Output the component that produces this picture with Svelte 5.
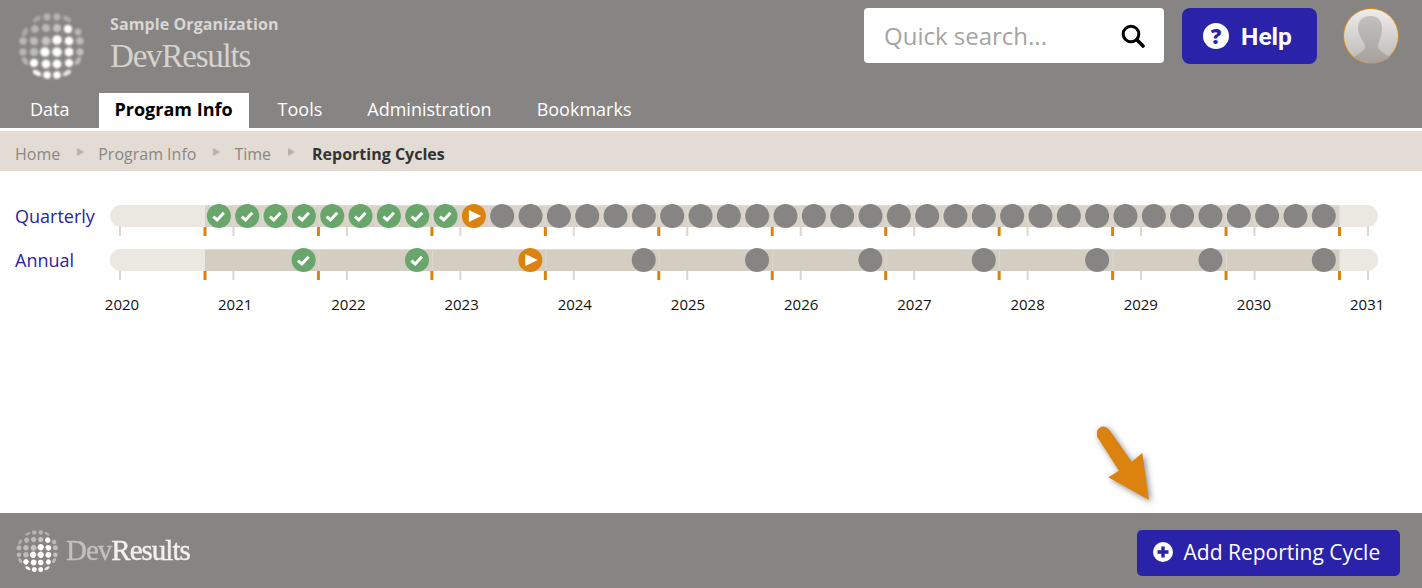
<script>
  const navItems = ['Data', 'Program Info', 'Tools', 'Administration', 'Bookmarks'];
  const crumbs = ['Home', 'Program Info', 'Time'];
  const years = Array.from({ length: 12 }, (_, i) => ({ label: 2020 + i, x: 120 + 113.45 * i, text: 122 + 113.2 * i }));
  const fiscal = Array.from({ length: 11 }, (_, i) => 205 + 113.45 * i);
  const quarters = Array.from({ length: 39 }, (_, i) => 233.4 + 28.36 * i);
  const qDots = Array.from({ length: 40 }, (_, i) => ({
    x: 218.9 + 28.33 * i,
    state: i < 9 ? 'done' : i === 9 ? 'now' : 'todo'
  }));
  const aDots = Array.from({ length: 10 }, (_, i) => ({
    x: 303.6 + 113.36 * i,
    state: i < 2 ? 'done' : i === 2 ? 'now' : 'todo'
  }));
  const rows = [
    { label: 'Quarterly', top: 34, dots: qDots, dividers: quarters, fill: '#d9d2c8' },
    { label: 'Annual', top: 78, dots: aDots, dividers: fiscal.slice(1, -1), fill: '#d4cdc1' }
  ];
  // globe dots: x, y, radius, opacity; edge dots are stretched along the rim
  const globeRows = [
    [[37,19,3.5,.3],[47,17,3.6,.38],[57,17,3.6,.38],[67,19,3.5,.34]],
    [[25,32,3.5,.33],[35,29,4,.4],[46,28,4,.45],[57,28,4,.5],[68,29,4.2,1],[78,32,3.5,.42]],
    [[23,41,3.8,.42],[34,41,4.2,.45],[46,41,4.4,.52],[57,40,4.8,1],[69,41,4.4,1],[80,41,3.8,.45]],
    [[23,52,3.6,.42],[34,52,4.2,.45],[45,52,4.8,1],[57,52,4.8,1],[69,52,4.4,1],[80,52,3.6,.5]],
    [[25,61,3.4,.42],[34,63,4.2,1],[46,64,4.4,1],[57,64,4.4,1],[69,63,4,1],[78,61,3.4,.45]],
    [[37,73,3.5,1],[47,75,3.8,1],[57,75,3.8,1],[67,73,3.5,.8]]
  ];
  const globe = globeRows.flat().map(([x, y, r, o]) => {
    const dx = x - 52, dy = y - 46;
    const edge = Math.hypot(dx, dy) > 30;
    return {
      x, y, o,
      rx: edge ? 2.4 : r,
      ry: edge ? r + 1 : r,
      rot: (Math.atan2(dy, dx) * 180) / Math.PI
    };
  });
</script>

{#snippet globeIcon(cls)}
  <svg class={cls} viewBox="17 10 70 72" aria-hidden="true">
    {#each globe as d}
      <ellipse cx={d.x} cy={d.y} rx={d.rx} ry={d.ry} fill="#fff" opacity={d.o} transform="rotate({d.rot} {d.x} {d.y})" />
    {/each}
  </svg>
{/snippet}

<div class="page">
  <header class="top">
    <div class="brandbar">
      {@render globeIcon('globe')}
      <div class="brand">
        <div class="org">Sample Organization</div>
        <div class="product">DevResults</div>
      </div>
      <div class="tools">
        <div class="search">
          <span class="placeholder">Quick search...</span>
          <svg class="searchicon" viewBox="0 0 24 24" aria-hidden="true">
            <circle cx="10" cy="10" r="7.8" fill="none" stroke="#000" stroke-width="3" />
            <path d="M15.8 15.8 L22 22" stroke="#000" stroke-width="3.6" stroke-linecap="round" />
          </svg>
        </div>
        <div class="help">
          <span class="helpdot">?</span>
          <span>Help</span>
        </div>
        <div class="avatar">
          <svg viewBox="0 0 56 56" aria-hidden="true">
            <defs>
              <linearGradient id="avbg" x1="0" y1="0" x2="0" y2="1">
                <stop offset="0" stop-color="#efeeed" />
                <stop offset="0.6" stop-color="#cfcdca" />
                <stop offset="1" stop-color="#bdbbb7" />
              </linearGradient>
              <linearGradient id="avhead" x1="0" y1="0" x2="0" y2="1">
                <stop offset="0" stop-color="#c2c0bd" />
                <stop offset="1" stop-color="#a5a29e" />
              </linearGradient>
            </defs>
            <circle cx="28" cy="28" r="27.5" fill="url(#avbg)" stroke="#d9830f" stroke-width="1" />
            <path d="M27.5 8 C19 8 15 13 15 20 C15 28 21 33 22 38 C22.5 42 17 45 11 49 C16 53 22 55 28 55 C35 55 42 53 47 49 C40 45 35 42 35 38 C36 33 39 28 39 20 C39 13 35 8 27.5 8 Z" fill="url(#avhead)" />
          </svg>
        </div>
      </div>
    </div>
    <nav class="nav">
      {#each navItems as item}
        <span class="tab" class:active={item === 'Program Info'}>{item}</span>
      {/each}
    </nav>
  </header>

  <div class="crumbs">
    {#each crumbs as c}
      <span class="crumb">{c}</span>
      <span class="sep"></span>
    {/each}
    <span class="current">Reporting Cycles</span>
  </div>

  <main class="main">
    <svg class="timeline" viewBox="0 0 1422 150" aria-label="Reporting cycles timeline">
      {#each rows as row}
        <text class="rowlabel" x="15" y={row.top + 18}>{row.label}</text>
        <rect x="110" y={row.top} width="1268" height="22" rx="11" fill="#ebe7e1" />
        <rect x="205" y={row.top} width="1134.5" height="22" fill={row.fill} />
        <rect x="205" y={row.top} width="1134.5" height="1" fill="#e2ddd5" />
        {#each row.dividers as x}
          <rect x={x} y={row.top} width="1" height="22" fill="#dfd9d0" />
        {/each}
        {#each years as y}
          <rect x={y.x - 1} y={row.top + 22} width="2" height="9" fill="#dcd6cc" />
        {/each}
        {#each fiscal as x}
          <rect x={x - 1.5} y={row.top + 22} width="3" height="9" fill="#dc830f" />
        {/each}
        {#each row.dots as d}
          <g transform="translate({d.x} {row.top + 11})">
            {#if d.state === 'done'}
              <circle r="12" fill="#69a66b" />
              <path d="M-5.6 0.6 L-1.7 4 L5 -3.2" fill="none" stroke="#fff" stroke-width="3" />
            {:else if d.state === 'now'}
              <circle r="12" fill="#dc830f" />
              <path d="M-5 -6 L7.4 0 L-5 6 Z" fill="#fff" />
            {:else}
              <circle r="12" fill="#868583" />
            {/if}
          </g>
        {/each}
      {/each}
      {#each years as y}
        <text class="yearlabel" x={y.text} y="138.5" text-anchor="middle">{y.label}</text>
      {/each}
    </svg>

    <svg class="arrow" viewBox="0 0 64 84" aria-hidden="true">
      <path d="M0.5 11.2 A7 7 0 0 1 12.1 3.4 L34.7 35.7 L45.3 27 L52 74 L11.3 51.3 L22 44.7 Z" fill="#dc830f" />
    </svg>
  </main>

  <footer class="foot">
    <div class="footbrand">
      {@render globeIcon('footglobe')}
      <span class="footname"><span class="dev">Dev</span>Results</span>
    </div>
    <div class="add">
      <svg class="plus" viewBox="0 0 20 20" aria-hidden="true">
        <circle cx="10" cy="10" r="10" fill="#fff" />
        <path d="M10 4.5 V15.5 M4.5 10 H15.5" stroke="#2a22a8" stroke-width="3.4" />
      </svg>
      <span>Add Reporting Cycle</span>
    </div>
  </footer>
</div>

<style>
  :global(body) {
    margin: 0;
    background: #fff;
  }
  .page {
    display: flex;
    flex-direction: column;
    height: 588px;
    overflow: hidden;
    font-family: "Open Sans", "Liberation Sans", sans-serif;
  }
  .top {
    background: #868583;
    height: 128px;
    display: flex;
    flex-direction: column;
  }
  .brandbar {
    height: 93px;
    display: flex;
    align-items: flex-start;
    padding-left: 17px;
    padding-right: 23px;
    box-sizing: border-box;
  }
  .globe {
    width: 70px;
    height: 72px;
    margin-top: 10px;
    filter: blur(0.8px);
  }
  .brand {
    margin-left: 23px;
    padding-top: 13px;
  }
  .org {
    font-size: 16px;
    line-height: 22px;
    font-weight: 700;
    color: #d9d6d3;
    letter-spacing: 0.1px;
  }
  .product {
    font-family: "Liberation Serif", serif;
    font-size: 33px;
    line-height: 38px;
    margin-top: 2px;
    color: #d6d3cf;
    letter-spacing: -1.2px;
  }
  .tools {
    margin-left: auto;
    display: flex;
    align-items: flex-start;
    padding-top: 8px;
  }
  .search {
    width: 300px;
    height: 55px;
    background: #fff;
    border-radius: 4px;
    display: flex;
    align-items: center;
    justify-content: space-between;
    padding: 0 20px;
    box-sizing: border-box;
  }
  .placeholder {
    font-size: 24px;
    color: #a6a4a1;
  }
  .searchicon {
    width: 24px;
    height: 24px;
    margin-right: -1px;
  }
  .help {
    margin-left: 18px;
    width: 135px;
    height: 56px;
    box-sizing: border-box;
    padding-right: 4px;
    background: #2a22a8;
    border-radius: 8px;
    color: #fff;
    display: flex;
    align-items: center;
    justify-content: center;
    gap: 12px;
    font-family: Roboto, sans-serif;
    font-size: 24.5px;
    font-weight: 700;
  }
  .helpdot {
    width: 26px;
    height: 26px;
    border-radius: 50%;
    background: #fff;
    color: #2a22a8;
    font-family: "Open Sans", sans-serif;
    font-size: 21px;
    line-height: 26px;
    font-weight: 800;
    text-align: center;
  }
  .avatar {
    width: 56px;
    height: 56px;
    margin-left: 26px;
  }
  .avatar svg {
    display: block;
    width: 56px;
    height: 56px;
  }
  .nav {
    height: 35px;
    display: flex;
    padding-left: 14px;
    gap: 13px;
  }
  .tab {
    padding: 0 16px;
    font-size: 18px;
    line-height: 33px;
    color: #fff;
  }
  .tab.active {
    background: #fff;
    color: #000;
    font-weight: 700;
    padding: 0 16px 0 15px;
    margin-left: 1px;
  }
  .crumbs {
    margin-top: 3px;
    height: 40px;
    box-sizing: border-box;
    padding-top: 6px;
    background: #e3dcd5;
    display: flex;
    align-items: center;
    padding-left: 15px;
    font-size: 16px;
    color: #8a8784;
  }
  .sep {
    width: 0;
    height: 0;
    margin: -4px 14px 0 17px;
    border-left: 7px solid #b5b1ab;
    border-top: 4px solid transparent;
    border-bottom: 4px solid transparent;
  }
  .current {
    font-weight: 700;
    color: #333;
    margin-left: 3px;
  }
  .main {
    flex: 1;
    position: relative;
  }
  .timeline {
    display: block;
    width: 1422px;
    height: 150px;
  }
  .rowlabel {
    font-size: 18px;
    fill: #2a22a8;
    font-family: "Open Sans", sans-serif;
  }
  .yearlabel {
    font-size: 15px;
    fill: #111;
    font-family: "Open Sans", sans-serif;
  }
  .arrow {
    position: absolute;
    left: 1097px;
    top: 255px;
    width: 64px;
    height: 84px;
    filter: drop-shadow(2px 2px 3px rgba(0, 0, 0, 0.45));
  }
  .foot {
    height: 75px;
    background: #868583;
    display: flex;
    align-items: center;
    justify-content: space-between;
    padding: 0 22px 0 15px;
  }
  .footbrand {
    display: flex;
    align-items: center;
    gap: 6px;
  }
  .footglobe {
    width: 45px;
    height: 46px;
    filter: blur(0.7px);
  }
  .footname {
    font-family: "Liberation Serif", serif;
    font-size: 29px;
    color: #f2f1ef;
    letter-spacing: -1px;
    -webkit-text-stroke: 0.4px currentColor;
    filter: blur(0.6px);
  }
  .dev {
    color: #c3c1be;
  }
  .add {
    width: 263px;
    height: 46px;
    margin-top: 4px;
    background: #2a22a8;
    border-radius: 5px;
    color: #fff;
    display: flex;
    align-items: center;
    box-sizing: border-box;
    padding: 0 0 2px 16px;
    gap: 10.5px;
    font-size: 21px;
  }
  .plus {
    width: 20px;
    height: 20px;
  }
</style>
